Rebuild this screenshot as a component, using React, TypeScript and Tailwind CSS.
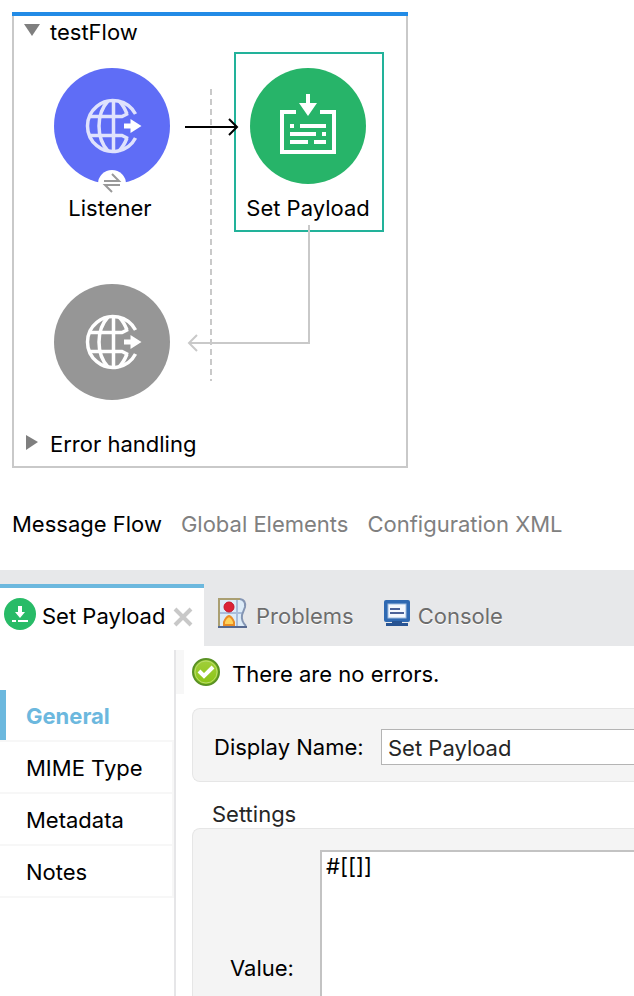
import { useState } from "react";

const editorTabs = ["Message Flow", "Global Elements", "Configuration XML"];
const sections = ["General", "MIME Type", "Metadata", "Notes"];

function GlobeIcon({ lines }: { lines: string }) {
  return (
    <svg viewBox="0 0 116 116" className="h-full w-full" fill="none" aria-hidden="true">
      <g stroke={lines} strokeWidth="3.5">
        <path d="M81.5 46A25.5 25.5 0 1 0 81.5 70" />
        <path d="M59.5 32V84M36 48.5H68L74 45.5M36 67.500H68L74 70.500" />
        <path d="M54 33C42 46 42 70 54 83M65 33C69 37 71 41 73 46M65 83C69 79 71 75 73 70" />
      </g>
      <path d="M70 55.5H76.5V51L87.5 58L76.5 65V60.5H70Z" fill="#fff" />
    </svg>
  );
}

function PayloadIcon() {
  return (
    <svg viewBox="0 0 116 116" className="h-full w-full" fill="none" aria-hidden="true">
      <path d="M46 44H32V84H84V44H70" stroke="#fff" strokeWidth="4" />
      <path d="M56 26H60V35H67L58 48L49 35H56Z" fill="#fff" />
      <path
        d="M40 58H44M50 58H76M40 66H66M72 66H76M40 74H58M64 74H76"
        stroke="#fff"
        strokeWidth="4"
      />
    </svg>
  );
}

function ProblemsIcon() {
  return (
    <svg viewBox="0 0 30 30" className="size-[30px]" fill="none" aria-hidden="true">
      <path d="M1 1H22Q28 2 27 9L24 17Q23 23 29 29H1Z" fill="#dcebf8" />
      <path d="M19 1V29M1 15H25" stroke="#a9bddb" strokeWidth="2" />
      <path d="M22 1Q28 2 27 9L24 17Q23 23 28 28" stroke="#8495b3" strokeWidth="2" />
      <path d="M1 29V1H22" stroke="#aa9f72" strokeWidth="2" />
      <path d="M0 29H29" stroke="#566990" strokeWidth="2" />
      <circle cx="11" cy="9" r="5" fill="#db2236" stroke="#c5152b" />
      <path d="M6 27V24Q8 19 11 18Q14 19 16 24V27Z" fill="#ffd35c" stroke="#e98c26" strokeWidth="2" />
    </svg>
  );
}

function ConsoleIcon() {
  return (
    <svg viewBox="0 0 26 26" className="size-[26px]" fill="none" aria-hidden="true">
      <rect width="26" height="22" rx="2" fill="#2f69b2" />
      <rect x="4" y="4" width="18" height="14" fill="#f4f8fe" stroke="#9ebce0" />
      <path d="M6 9H16M6 13H20" stroke="#4b6299" strokeWidth="2" />
      <path d="M8 21H18V23H24V26H2V23H8Z" fill="#285493" />
    </svg>
  );
}

function SuccessIcon() {
  return (
    <svg viewBox="0 0 28 28" className="size-7" aria-hidden="true">
      <defs>
        <linearGradient id="ok" x1="0" y1="0" x2="0" y2="1">
          <stop offset="0" stopColor="#a2cf3c" />
          <stop offset="1" stopColor="#8ac414" />
        </linearGradient>
      </defs>
      <circle cx="14" cy="14" r="13" fill="url(#ok)" stroke="#5a9224" strokeWidth="2" />
      <circle cx="14" cy="14" r="11" fill="none" stroke="#b9dd6c" />
      <path d="M7 13L12 18L21 9" fill="none" stroke="#fff" strokeWidth="4" />
    </svg>
  );
}

function FlowCanvas() {
  return (
    <div className="relative h-[374px]">
      <div className="absolute top-1 left-[220px] h-[180px] w-[150px] border-2 border-[#22b29a]" />
      <svg className="absolute inset-0 h-full w-full" fill="none" aria-hidden="true">
        <path d="M197 41V333" stroke="#c9c9c9" strokeWidth="2" strokeDasharray="6 4" />
        <path d="M295 177V295H175M183 287L175 295L183 303" stroke="#c9c9c9" strokeWidth="2" />
        <path d="M171 79H223M215 71L223 79L215 87" stroke="#000" strokeWidth="2" />
      </svg>
      <div className="absolute top-5 left-10 size-[116px] rounded-full bg-[#5f6df6]">
        <GlobeIcon lines="#dfe2fd" />
      </div>
      <div className="absolute top-[122px] left-[84px] size-7 rounded-full bg-white">
        <svg viewBox="0 0 28 28" fill="none" stroke="#999" strokeWidth="2" aria-hidden="true">
          <path d="M6 11H21L14 4M22 15H7L14 22" />
        </svg>
      </div>
      <div className="absolute top-[146px] left-6 w-36 text-center">Listener</div>
      <div className="absolute top-5 left-[236px] size-[116px] rounded-full bg-[#27b469]">
        <PayloadIcon />
      </div>
      <div className="absolute top-[146px] left-[220px] w-[148px] text-center">Set Payload</div>
      <div className="absolute top-[236px] left-10 size-[116px] rounded-full bg-[#969696]">
        <GlobeIcon lines="#fff" />
      </div>
    </div>
  );
}

export default function App() {
  const [editorTab, setEditorTab] = useState("Message Flow");
  const [section, setSection] = useState("General");
  const [name, setName] = useState("Set Payload");
  const [value, setValue] = useState("#[[]]");

  return (
    <div className="flex h-screen flex-col overflow-hidden bg-white font-['Inter',sans-serif] text-[22px] leading-7 text-black">
      {/* Flow editor */}
      <div className="shrink-0 p-3">
        <div className="w-[396px] bg-[#228be6] pt-1">
          <div className="border-2 border-t-0 border-[#c9c9c9] bg-white">
            <button className="flex h-8 items-center gap-2 pl-2.5">
              <svg viewBox="0 0 18 16" className="h-4 w-[18px]" aria-hidden="true">
                <path d="M0 0H16L8 12Z" fill="#7f7f7f" />
              </svg>
              testFlow
            </button>
            <FlowCanvas />
            <button className="flex h-11 items-center gap-2 pl-2.5">
              <svg viewBox="0 0 18 18" className="size-[18px]" aria-hidden="true">
                <path d="M2 0V15L14 7Z" fill="#7f7f7f" />
              </svg>
              Error handling
            </button>
          </div>
        </div>
      </div>

      <div className="flex h-[90px] shrink-0 items-start gap-[19px] px-3 pt-[30px]">
        {editorTabs.map((tab) => (
          <button
            key={tab}
            onClick={() => setEditorTab(tab)}
            className={`whitespace-nowrap ${tab === editorTab ? "text-black" : "text-[#808080]"}`}
          >
            {tab}
          </button>
        ))}
      </div>

      {/* View tabs */}
      <div className="flex h-[76px] shrink-0 bg-[#e7e8ea] pt-3.5">
        <div className="flex w-[204px] items-center border-t-4 border-[#6cb8de] bg-white pl-1">
          <button className="flex items-center gap-1.5 pb-1.5 whitespace-nowrap">
            <svg viewBox="0 0 32 32" className="size-8" aria-hidden="true">
              <circle cx="16" cy="16" r="16" fill="#28bb67" />
              <path d="M14 8H18V14H21L16 20L11 14H14Z" fill="#fff" />
              <path d="M8 23H12M14 23H24" stroke="#fff" strokeWidth="2" />
            </svg>
            <span className="pt-1">Set Payload</span>
          </button>
          <button aria-label="Close" className="ml-2">
            <svg viewBox="0 0 20 20" className="size-5" stroke="#c8c8c8" strokeWidth="4">
              <path d="M2 2L18 18M18 2L2 18" />
            </svg>
          </button>
        </div>
        <button className="ml-3.5 flex items-center gap-2 pb-1 text-[#6d6d6d]">
          <ProblemsIcon />
          <span className="pt-1.5 [text-shadow:0_1px_0_#fff]">Problems</span>
        </button>
        <button className="ml-[30px] flex items-center gap-2 pb-1 text-[#6d6d6d]">
          <ConsoleIcon />
          <span className="pt-1.5 [text-shadow:0_1px_0_#fff]">Console</span>
        </button>
      </div>

      {/* Properties */}
      <div className="flex min-h-0 flex-1 pt-1">
        <nav className="w-44 shrink-0 border-r-2 border-[#e6e6e8] pt-10">
          {sections.map((item) => (
            <button
              key={item}
              onClick={() => setSection(item)}
              className={`flex h-[52px] w-full items-center gap-5 border-b-2 border-[#f7f7f7] ${
                item === section ? "font-bold text-[#6cb8de]" : "border-r-2"
              }`}
            >
              <span className={`h-full w-1.5 ${item === section ? "bg-[#6cb8de]" : ""}`} />
              <span className="pt-0.5">{item}</span>
            </button>
          ))}
        </nav>
        <div className="h-11 w-2 shrink-0 bg-[#f7f7f7]" />
        <main className="flex min-w-0 flex-1 flex-col pl-2">
          <div className="flex h-[58px] shrink-0 items-start gap-3 pt-2">
            <SuccessIcon />
            <p className="leading-8">There are no errors.</p>
          </div>
          <div className="flex h-[74px] shrink-0 items-start rounded-l-lg border border-r-0 border-[#e6e6e6] bg-[#f4f4f4] pt-5 pl-[21px]">
            <label htmlFor="display-name" className="w-[167px] shrink-0 leading-9">
              Display Name:
            </label>
            <input
              id="display-name"
              value={name}
              onChange={(e) => setName(e.target.value)}
              className="h-9 min-w-0 flex-1 border border-r-0 border-[#b4b4b4] bg-white px-1.5 pt-0.5 text-[#262626]"
            />
          </div>
          <h2 className="mt-[18px] shrink-0 pl-5 text-[#262626]">Settings</h2>
          <div className="flex min-h-0 flex-1 rounded-tl-lg border-t border-l border-[#e6e6e6] bg-[#f4f4f4] pt-[21px]">
            <label htmlFor="value" className="w-[127px] shrink-0 self-end pb-3.5 pl-[37px]">
              Value:
            </label>
            <textarea
              id="value"
              value={value}
              onChange={(e) => setValue(e.target.value)}
              className="min-w-0 flex-1 resize-none border-t-2 border-l-2 border-[#c3c3c3] bg-white px-1"
            />
          </div>
        </main>
      </div>
    </div>
  );
}
